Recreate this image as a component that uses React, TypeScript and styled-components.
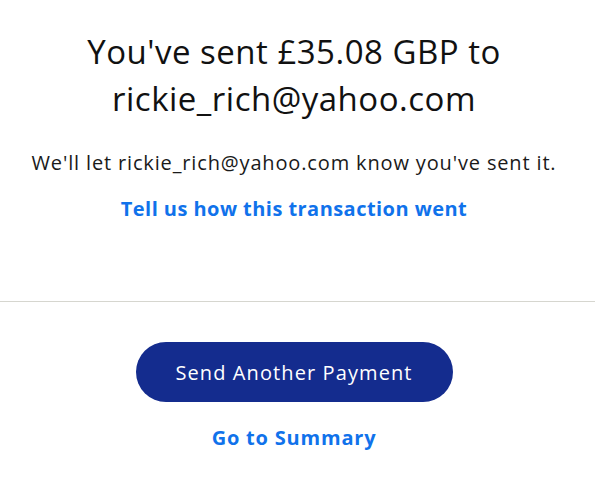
import styled, { createGlobalStyle } from 'styled-components';

const GlobalStyle = createGlobalStyle`
    body {
        margin: 0;
        background: #ffffff;
        font-family: "Open Sans", Lato, sans-serif;
        color: #1a1a1a;
    }
`;

const Page = styled.div`
    display: flex;
    flex-direction: column;
    width: 595px;
`;

const Column = styled.div`
    display: flex;
    flex-direction: column;
    align-items: center;
    width: 588px;
`;

const Top = styled.section`
    padding: 28px 0 0;
    height: 301px;
    box-sizing: border-box;
`;

const Heading = styled.h1`
    margin: 0;
    font-size: 33px;
    font-weight: 400;
    line-height: 47px;
    letter-spacing: 0.5px;
    text-align: center;
    width: 480px;
    color: #111;
`;

const Message = styled.p`
    margin: 28px 0 0;
    font-size: 20px;
    line-height: 26px;
    letter-spacing: 0.85px;
    text-align: center;
    white-space: nowrap;
`;

const TextLink = styled.a<{ $top?: number; $spacing?: number }>`
    display: block;
    margin-top: ${(p) => p.$top ?? 20}px;
    font-size: 20px;
    font-weight: 700;
    line-height: 26px;
    letter-spacing: ${(p) => p.$spacing ?? 0.45}px;
    color: #1072eb;
    text-decoration: none;
    text-align: center;
`;

const Divider = styled.hr`
    margin: 0;
    border: none;
    border-top: 1px solid #d6d6cf;
    width: 100%;
`;

const Bottom = styled.section`
    padding-top: 40px;
`;

const PrimaryButton = styled.button`
    width: 317px;
    height: 60px;
    border: none;
    border-radius: 30px;
    background: #142c8e;
    color: #fff;
    font-family: inherit;
    font-size: 20px;
    font-weight: 500;
    letter-spacing: 1.1px;
    cursor: pointer;
`;

const App = () => {
    return (
        <Page>
            <GlobalStyle />
            <Top>
                <Column>
                    <Heading>You've sent £35.08 GBP to rickie_rich@yahoo.com</Heading>
                    <Message>We'll let rickie_rich@yahoo.com know you've sent it.</Message>
                    <TextLink href="#">Tell us how this transaction went</TextLink>
                </Column>
            </Top>
            <Divider />
            <Bottom>
                <Column>
                    <PrimaryButton>Send Another Payment</PrimaryButton>
                    <TextLink href="#" $top={23} $spacing={0.8}>Go to Summary</TextLink>
                </Column>
            </Bottom>
        </Page>
    );
};

export default App;
